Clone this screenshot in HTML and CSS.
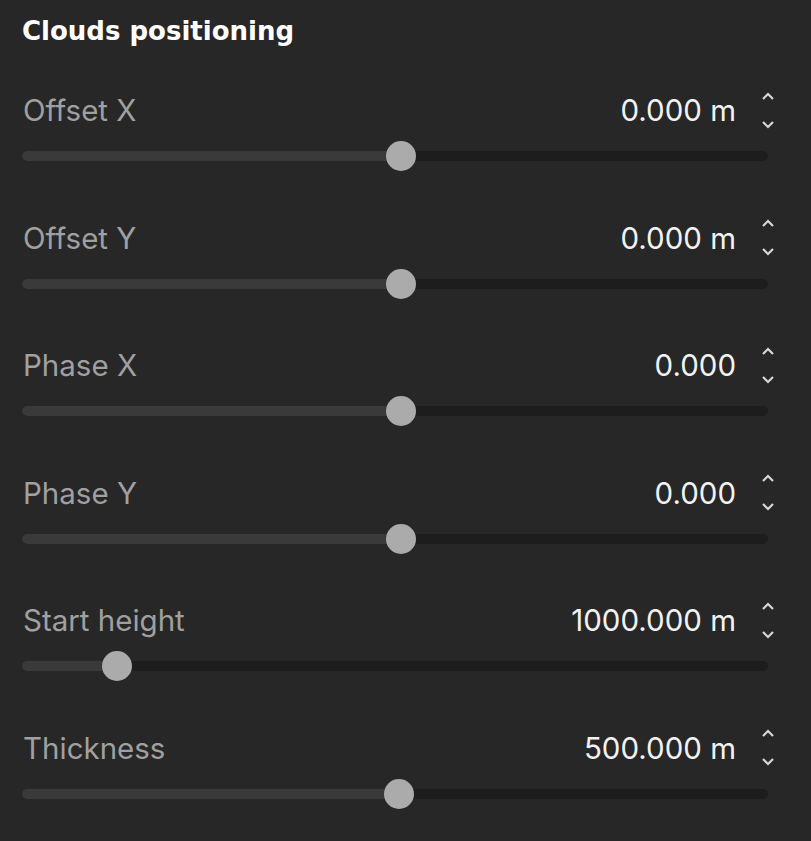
FILE: index.html
```html
<!DOCTYPE html>
<html>
<head>
<meta charset="utf-8">
<link rel="stylesheet" href="styles.css">
</head>
<body>
<div class="panel">
  <h1 class="title">Clouds positioning</h1>

  <div class="row">
    <div class="head">
      <span class="label">Offset X</span>
      <span class="value">0.000 m</span>
      <span class="spin">
        <svg width="12" height="8" viewBox="0 0 12 8"><polyline points="1,7 6,2 11,7"/></svg>
        <svg width="12" height="8" viewBox="0 0 12 8"><polyline points="1,1 6,6 11,1"/></svg>
      </span>
    </div>
    <div class="track"><div class="fill" style="width:50.87%"></div><div class="thumb" style="left:50.87%"></div></div>
  </div>

  <div class="row">
    <div class="head">
      <span class="label">Offset Y</span>
      <span class="value">0.000 m</span>
      <span class="spin">
        <svg width="12" height="8" viewBox="0 0 12 8"><polyline points="1,7 6,2 11,7"/></svg>
        <svg width="12" height="8" viewBox="0 0 12 8"><polyline points="1,1 6,6 11,1"/></svg>
      </span>
    </div>
    <div class="track"><div class="fill" style="width:50.8%"></div><div class="thumb" style="left:50.8%"></div></div>
  </div>

  <div class="row">
    <div class="head">
      <span class="label">Phase X</span>
      <span class="value">0.000</span>
      <span class="spin">
        <svg width="12" height="8" viewBox="0 0 12 8"><polyline points="1,7 6,2 11,7"/></svg>
        <svg width="12" height="8" viewBox="0 0 12 8"><polyline points="1,1 6,6 11,1"/></svg>
      </span>
    </div>
    <div class="track"><div class="fill" style="width:50.8%"></div><div class="thumb" style="left:50.8%"></div></div>
  </div>

  <div class="row">
    <div class="head">
      <span class="label">Phase Y</span>
      <span class="value">0.000</span>
      <span class="spin">
        <svg width="12" height="8" viewBox="0 0 12 8"><polyline points="1,7 6,2 11,7"/></svg>
        <svg width="12" height="8" viewBox="0 0 12 8"><polyline points="1,1 6,6 11,1"/></svg>
      </span>
    </div>
    <div class="track"><div class="fill" style="width:50.8%"></div><div class="thumb" style="left:50.8%"></div></div>
  </div>

  <div class="row">
    <div class="head">
      <span class="label">Start height</span>
      <span class="value">1000.000 m</span>
      <span class="spin">
        <svg width="12" height="8" viewBox="0 0 12 8"><polyline points="1,7 6,2 11,7"/></svg>
        <svg width="12" height="8" viewBox="0 0 12 8"><polyline points="1,1 6,6 11,1"/></svg>
      </span>
    </div>
    <div class="track"><div class="fill" style="width:12.7%"></div><div class="thumb" style="left:12.7%"></div></div>
  </div>

  <div class="row">
    <div class="head">
      <span class="label">Thickness</span>
      <span class="value">500.000 m</span>
      <span class="spin">
        <svg width="12" height="8" viewBox="0 0 12 8"><polyline points="1,7 6,2 11,7"/></svg>
        <svg width="12" height="8" viewBox="0 0 12 8"><polyline points="1,1 6,6 11,1"/></svg>
      </span>
    </div>
    <div class="track"><div class="fill" style="width:50.5%"></div><div class="thumb" style="left:50.5%"></div></div>
  </div>
</div>
</body>
</html>
```
FILE: styles.css
```css
html, body {
  margin: 0;
  padding: 0;
  background: #272727;
}
body {
  width: 811px;
  height: 841px;
  overflow: hidden;
}
.panel {
  padding: 16px 37px 0 22px;
}
.title {
  margin: 0 0 44px 0;
  font-family: "DejaVu Sans", Arial, sans-serif;
  font-weight: 700;
  font-size: 26px;
  line-height: 30px;
  color: #ffffff;
}
.row {
  height: 127.6px;
}
.head {
  display: flex;
  align-items: center;
  height: 40px;
  font-family: Inter, "Noto Sans", sans-serif;
  font-size: 29.5px;
}
.label {
  flex: 1;
  color: #a0a0a0;
  padding-left: 1px;
}
.value {
  color: #f2f2f2;
  margin-right: 26px;
}
.spin {
  display: flex;
  flex-direction: column;
  gap: 21px;
  width: 12px;
}
.spin svg {
  display: block;
  fill: none;
  stroke: #d6d6d6;
  stroke-width: 2.2;
}
.track {
  position: relative;
  display: flex;
  margin: 21px 6px 0 0;
  height: 10px;
  border-radius: 5px;
  background: #1d1d1d;
}
.fill {
  height: 10px;
  border-radius: 5px 0 0 5px;
  background: #3a3a3a;
}
.thumb {
  position: absolute;
  top: -10px;
  width: 30px;
  height: 30px;
  margin-left: -15px;
  border-radius: 50%;
  background: #ababab;
}
```
